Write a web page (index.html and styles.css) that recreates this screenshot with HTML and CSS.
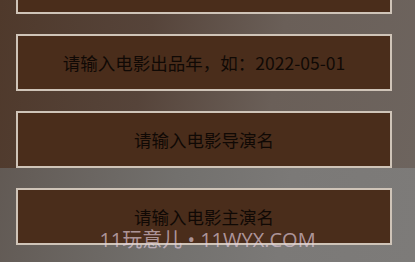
FILE: index.html
```html
<!DOCTYPE html>
<html lang="zh-CN">
<head>
    <meta charset="UTF-8">
    <meta name="viewport" content="width=device-width, initial-scale=1.0">
    <title>电影信息</title>
    <link rel="stylesheet" href="styles.css">
</head>
<body>
    <div class="form-list">
        <input class="field" type="text" placeholder="请输入电影名称">
        <input class="field" type="text" placeholder="请输入电影出品年，如：2022-05-01">
        <input class="field" type="text" placeholder="请输入电影导演名">
        <input class="field" type="text" placeholder="请输入电影主演名">
    </div>
    <div class="watermark">11玩意儿 • 11WYX.COM</div>
</body>
</html>
```

FILE: styles.css
```css
body {
    margin: 0;
    height: 262px;
    overflow: hidden;
    position: relative;
    font-family: "Noto Sans CJK SC", "Noto Sans", sans-serif;
    background:
        linear-gradient(100deg, #4f392b 0%, #56443a 35%, #6a5f58 65%, #6d645e 100%) top left / 100% 168px no-repeat,
        linear-gradient(100deg, #5f5650 0%, #72706d 45%, #7b7977 70%, #7d7b79 100%);
}
.form-list {
    display: flex;
    flex-direction: column;
    gap: 20px;
    padding: 0 23px 0 16px;
    margin-top: -43px;
}
.field {
    box-sizing: border-box;
    height: 57px;
    width: 100%;
    background: #4a2d1b;
    border: 2px solid #cfc4b8;
    text-align: center;
    font-family: "Noto Sans CJK SC", sans-serif;
    font-size: 17.5px;
    color: #111;
    outline: none;
}
.field::placeholder {
    color: #100905;
}
.watermark {
    position: absolute;
    left: 0;
    right: 0;
    top: 224px;
    text-align: center;
    font-family: "Open Sans", "Noto Sans CJK SC", sans-serif;
    font-size: 20px;
    color: rgba(230, 210, 225, 0.65);
}
```
